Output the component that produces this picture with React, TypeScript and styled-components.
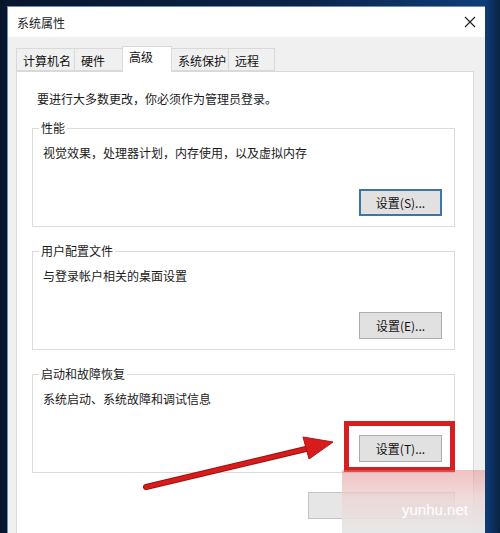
import styled, { createGlobalStyle } from "styled-components";

const GlobalStyle = createGlobalStyle`
  html, body {
    margin: 0;
    padding: 0;
    background: #0a1b36;
  }
  body {
    font-family: "Noto Sans CJK SC", "Noto Sans", sans-serif;
    font-size: 12px;
    color: #111;
  }
`;

const tabs = [
  { label: "计算机名", width: 59 },
  { label: "硬件", width: 49 },
  { label: "高级", width: 50, active: true },
  { label: "系统保护", width: 58 },
  { label: "远程", width: 47 },
];

const groups = [
  { title: "性能", text: "视觉效果，处理器计划，内存使用，以及虚拟内存", button: "设置(S)...", primary: true },
  { title: "用户配置文件", text: "与登录帐户相关的桌面设置", button: "设置(E)..." },
  { title: "启动和故障恢复", text: "系统启动、系统故障和调试信息", button: "设置(T)...", marked: true },
];

const App = () => {
  return (
    <>
      <GlobalStyle />
      <Desktop>
        <Dialog>
          <TitleBar>
            <Title>系统属性</Title>
            <CloseButton>
              <svg width="12" height="12" viewBox="0 0 12 12">
                <path d="M1 1 L11 11 M11 1 L1 11" stroke="#222" strokeWidth="1.2" />
              </svg>
            </CloseButton>
          </TitleBar>
          <Body>
            <TabStrip>
              {tabs.map((t) => (
                <Tab key={t.label} $active={t.active} $width={t.width}>
                  {t.label}
                </Tab>
              ))}
            </TabStrip>
            <Panel>
              <Intro>要进行大多数更改，你必须作为管理员登录。</Intro>
              {groups.map((g) => (
                <Group key={g.title}>
                  <Legend>{g.title}</Legend>
                  <Description>{g.text}</Description>
                  <ButtonRow>
                    {g.marked ? (
                      <Marked>
                        <Button>{g.button}</Button>
                        <Highlight />
                      </Marked>
                    ) : (
                      <Button $primary={g.primary}>{g.button}</Button>
                    )}
                  </ButtonRow>
                </Group>
              ))}
              <BottomRow>
                <WideButton aria-label="环境变量" />
              </BottomRow>
            </Panel>
          </Body>
        </Dialog>

        {/* annotation arrow pointing at the startup settings button */}
        <Overlay viewBox="0 0 500 533">
          <line x1="146" y1="487" x2="310" y2="448" stroke="#9c1010" strokeWidth="6" strokeLinecap="round" />
          <line x1="146" y1="487" x2="310" y2="448" stroke="#d81c1c" strokeWidth="4" strokeLinecap="round" />
          <polygon points="333,442 303,437 309,459" fill="#d81c1c" stroke="#b01414" strokeWidth="1" />
        </Overlay>

        <Watermark>yunhu.net</Watermark>
      </Desktop>
    </>
  );
};

export default App;

const Desktop = styled.div`
  position: relative;
  width: 500px;
  height: 533px;
  overflow: hidden;
  box-sizing: border-box;
  padding: 6px 15px 0 7px;
  background: linear-gradient(to right, #08162d 0%, #0b2447 60%, #0f3d78 97%, #0a2244 100%);
`;

const Dialog = styled.div`
  display: flex;
  flex-direction: column;
  height: 100%;
  background: #f0f0f0;
  border-left: 1px solid #6f8fb5;
  border-top: 1px solid #6f8fb5;
  box-sizing: border-box;
`;

const TitleBar = styled.div`
  display: flex;
  align-items: center;
  justify-content: space-between;
  height: 30px;
  padding: 0 8px 0 9px;
  background: #ffffff;
`;

const Title = styled.span`
  font-size: 12px;
  color: #222;
`;

const CloseButton = styled.span`
  display: flex;
  width: 14px;
  height: 14px;
  align-items: center;
  justify-content: center;
`;

const Body = styled.div`
  flex: 1;
  display: flex;
  flex-direction: column;
  padding: 9px 11px 0 8px;
`;

const TabStrip = styled.div`
  display: flex;
  align-items: flex-end;
  height: 25px;
  position: relative;
  z-index: 1;
`;

const Tab = styled.div<{ $active?: boolean; $width: number }>`
  box-sizing: border-box;
  width: ${(p) => p.$width}px;
  height: ${(p) => (p.$active ? 26 : 23)}px;
  margin-left: -1px;
  margin-bottom: ${(p) => (p.$active ? -1 : 0)}px;
  padding: ${(p) => (p.$active ? "2px" : "4px")} 0 0 6px;
  border: 1px solid #d9d9d9;
  border-bottom: ${(p) => (p.$active ? "none" : "1px solid #d9d9d9")};
  background: ${(p) => (p.$active ? "#ffffff" : "#f0f0f0")};
  font-size: 12px;
  line-height: 16px;
  color: #111;
  white-space: nowrap;

  &:first-child {
    margin-left: 0;
  }
`;

const Panel = styled.div`
  flex: 1;
  display: flex;
  flex-direction: column;
  padding: 19px 18px 0 15px;
  background: #ffffff;
  border: 1px solid #d9d9d9;
  border-bottom: none;
`;

const Intro = styled.p`
  margin: 0 0 0 5px;
  font-size: 12px;
  line-height: 16px;
  color: #1a1a1a;
`;

const Group = styled.fieldset`
  margin: 13px 0 0;
  padding: 0 12px 10px 6px;
  border: 1px solid #dcdcdc;
  min-width: 0;

  & + & {
    margin-top: 16px;
  }
`;

const Legend = styled.legend`
  padding: 0 2px;
  font-size: 12px;
  line-height: 16px;
  color: #1a1a1a;
`;

const Description = styled.div`
  margin: 9px 0 0 4px;
  font-size: 12px;
  line-height: 16px;
  color: #1a1a1a;
`;

const ButtonRow = styled.div`
  display: flex;
  justify-content: flex-end;
  margin-top: 28px;
`;

const Button = styled.button<{ $primary?: boolean }>`
  box-sizing: border-box;
  width: 83px;
  height: 27px;
  padding: 0;
  font-family: "Noto Sans CJK SC", "Noto Sans", sans-serif;
  font-size: 12px;
  color: #111;
  background: #e1e1e1;
  border: ${(p) => (p.$primary ? "2px solid #3f74a3" : "1px solid #adadad")};
`;

const Marked = styled.div`
  position: relative;
  display: flex;
`;

const Highlight = styled.div`
  position: absolute;
  top: -14px;
  left: -15px;
  right: -13px;
  bottom: -10px;
  border: 5px solid #d42020;
  pointer-events: none;
`;

const BottomRow = styled.div`
  display: flex;
  justify-content: flex-end;
  margin-top: 19px;
`;

const WideButton = styled(Button)`
  width: 147px;
  background: #e6e6e6;
  border-color: #c4c4c4;
`;

const Overlay = styled.svg`
  position: absolute;
  top: 0;
  left: 0;
  width: 500px;
  height: 533px;
  pointer-events: none;
`;

const Watermark = styled.div`
  position: absolute;
  left: 342px;
  top: 470px;
  width: 143px;
  height: 63px;
  box-sizing: border-box;
  padding: 31px 0 0 60px;
  background: linear-gradient(
    to bottom,
    rgba(226, 120, 120, 0.45) 0%,
    rgba(236, 214, 214, 0.85) 45%,
    rgba(230, 230, 230, 0.95) 100%
  );
  font-family: "Liberation Sans", Arial, sans-serif;
  font-size: 15px;
  line-height: 18px;
  color: #ffffff;
`;
